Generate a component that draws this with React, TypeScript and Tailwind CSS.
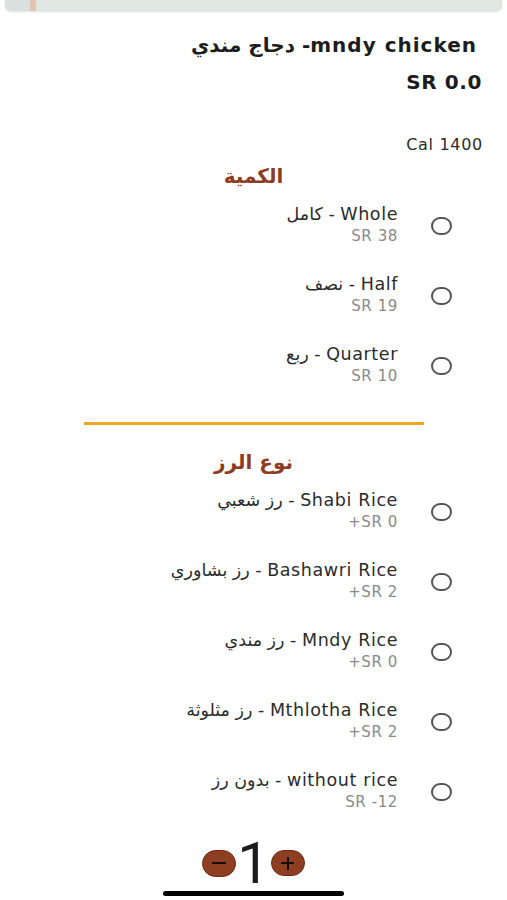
import { useState } from "react";

interface OptionType {
  label: string;
  ar: string;
  price: string;
}

const sizes: OptionType[] = [
  { label: "Whole", ar: "كامل", price: "SR 38" },
  { label: "Half", ar: "نصف", price: "SR 19" },
  { label: "Quarter", ar: "ربع", price: "SR 10" },
];

const rices: OptionType[] = [
  { label: "Shabi Rice", ar: "رز شعبي", price: "+SR 0" },
  { label: "Bashawri Rice", ar: "رز بشاوري", price: "+SR 2" },
  { label: "Mndy Rice", ar: "رز مندي", price: "+SR 0" },
  { label: "Mthlotha Rice", ar: "رز مثلوثة", price: "+SR 2" },
  { label: "without rice", ar: "بدون رز", price: "SR -12" },
];

function OptionRow({ option }: { option: OptionType }) {
  return (
    <div className="flex items-center justify-end gap-[33px] pr-[55px]">
      <div className="flex flex-col items-end">
        <span className="text-[17.5px] leading-[21px] tracking-[0.6px] text-[#2b2b2b]" dir="ltr">
          {option.ar} - {option.label}
        </span>
        <span className="text-[15px] leading-[22px] tracking-[0.6px] text-[#8a8a8a]" dir="ltr">
          {option.price}
        </span>
      </div>
      <span className="block h-[18px] w-[21px] rounded-full border-2 border-[#555]" />
    </div>
  );
}

function Section({ title, options }: { title: string; options: OptionType[] }) {
  return (
    <div>
      <h2 className="text-center text-[20px] font-bold leading-[24px] text-[#8c3c1f]">
        {title}
      </h2>
      <div className="mt-[16px] flex flex-col gap-[27px]">
        {options.map((o) => (
          <OptionRow key={o.label} option={o} />
        ))}
      </div>
    </div>
  );
}

export default function App() {
  const [count] = useState(1);

  return (
    <div
      className="min-h-[900px] w-full bg-white"
      style={{ fontFamily: '"DejaVu Sans", sans-serif' }}
    >
      <div className="mx-[5px] flex h-[11px] overflow-hidden rounded-b-md bg-[#e0e7e3] shadow-sm">
        <div className="w-[25px] bg-[#d9e0de]" />
        <div className="w-[6px] bg-[#e4c5b4]" />
      </div>

      <h1
        className="mt-[22px] pr-[30px] text-right text-[20px] font-bold leading-[24px] tracking-[1px] text-[#1c1c1c]"
        dir="ltr"
      >
        دجاج مندي -mndy chicken
      </h1>
      <div className="mt-[13px] pr-[25px] text-right text-[20px] font-bold leading-[24px] tracking-[0.6px] text-[#1c1c1c]">
        SR 0.0
      </div>
      <div className="mt-[41px] pr-[24px] text-right text-[16px] leading-[20px] tracking-[0.7px] text-[#2b2b2b]">
        Cal 1400
      </div>

      <div className="mt-[9px]">
        <Section title="الكمية" options={sizes} />
      </div>

      <div className="mx-auto mt-[35px] h-[3px] w-[340px] bg-[#f2a51f]" />

      <div className="mt-[25px]">
        <Section title="نوع الرز" options={rices} />
      </div>

      <div className="mt-[30px] flex h-[40px] items-center justify-center">
        <span className="flex h-[27px] w-[34px] items-center justify-center rounded-full border border-[#6b2a12] bg-[#8e3f21]">
          <span className="block h-[2px] w-[14px] bg-[#1a0a04]" />
        </span>
        <span
          className="mx-[1px] text-[58px] font-normal leading-none text-[#1c1c1c]"
          style={{ fontFamily: "Roboto, sans-serif" }}
        >
          {count}
        </span>
        <span className="relative flex h-[26px] w-[34px] items-center justify-center rounded-full border border-[#6b2a12] bg-[#8e3f21]">
          <span className="block h-[2px] w-[13px] bg-[#1a0a04]" />
          <span className="absolute h-[13px] w-[2px] bg-[#1a0a04]" />
        </span>
      </div>
      <div className="mx-auto mt-[8px] h-[5px] w-[181px] rounded-full bg-black" />
    </div>
  );
}
